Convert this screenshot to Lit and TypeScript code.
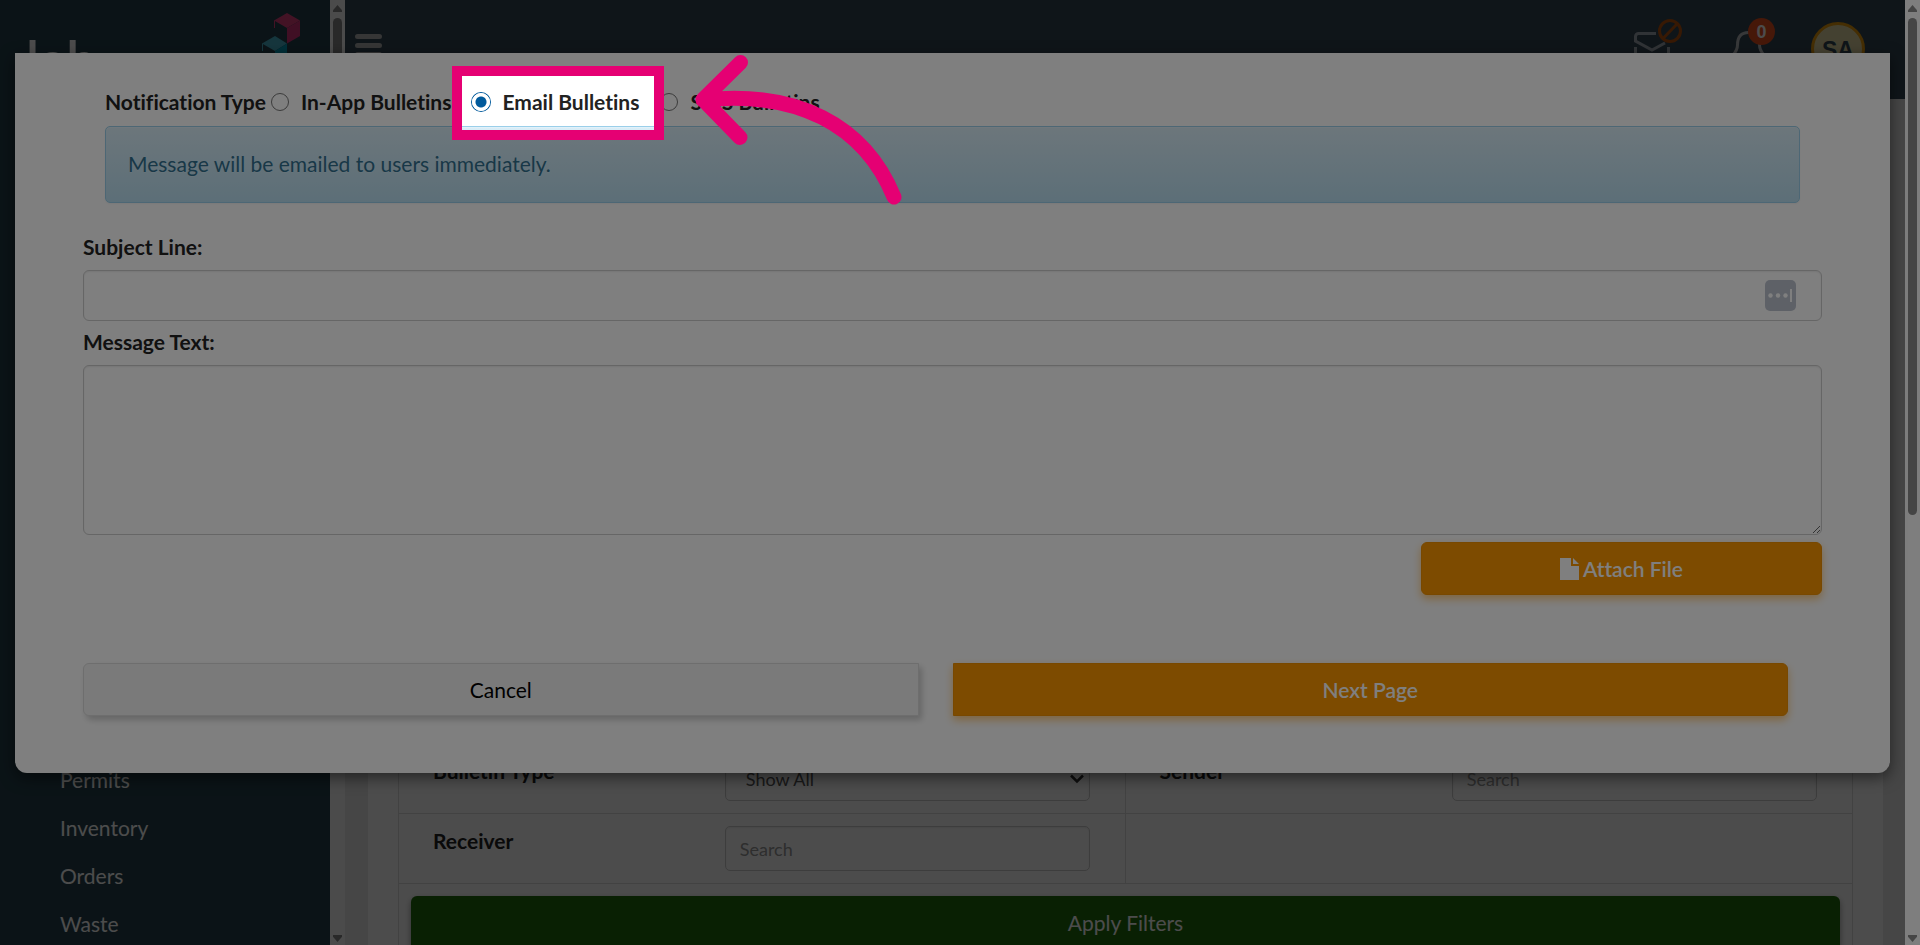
import { LitElement, html, css, svg } from "lit";
import { customElement } from "lit/decorators.js";

const NAV = ["Permits", "Inventory", "Orders", "Waste"];

@customElement("scroll-rail")
class ScrollRail extends LitElement {
  static styles = css`
    :host { display: flex; flex-direction: column; align-items: center; gap: 6px; box-sizing: border-box; flex: 0 0 15px; padding: 5px 0 3px; background: #fcfcfc; }
    .thumb { width: 9px; flex: 0 1 auto; border-radius: 5px; background: #8b8b8b; }
    .short { height: 497px; }
    .up, .down { display: block; flex: none; }
    .down { margin-top: auto; }
  `;
  render() {
    return html`
      <svg class="up" width="9" height="7" viewBox="0 0 9 7"><path d="M4.5 0 9 5.2V7H0V5.2z" fill="#8b8b8b"/></svg>
      <div class="thumb short"></div>
      <svg class="down" width="9" height="7" viewBox="0 0 9 7"><path d="M4.5 7 9 1.8V0H0v1.8z" fill="#8b8b8b"/></svg>`;
  }
}

@customElement("app-root")
class AppRoot extends LitElement {
  static styles = css`
    :host { display: block; position: relative; height: 100vh; overflow: hidden; font: 21px/28px Lato, sans-serif; font-variant-ligatures: none; color: #222; }
    * { box-sizing: border-box; }
    button, input, select, textarea { font: inherit; margin: 0; }
    .page { display: flex; height: 100%; }
    .shell { flex: 1; min-width: 0; display: flex; position: relative; }
    .sidebar { flex: 0 0 330px; display: flex; flex-direction: column; justify-content: space-between; background: #25424e; overflow: hidden; }
    .brand { display: flex; align-items: flex-start; justify-content: space-between; padding: 13px 30px 0 26px; }
    .word { font-weight: 600; font-size: 54px; line-height: 60px; padding-top: 17px; color: #fff; }
    .nav { display: flex; flex-direction: column; gap: 8px; padding: 0 0 1px 60px; }
    .nav a { line-height: 40px; color: #fff; text-decoration: none; }
    .main { flex: 1; min-width: 0; display: flex; flex-direction: column; background: #e9e9e9; }
    .top { flex: 0 0 99px; display: flex; justify-content: space-between; align-items: flex-start; padding: 17px 40px 0 10px; background: #334654; }
    .burger { border: 0; background: none; padding: 17px 0 0; line-height: 0; }
    .tools { display: flex; align-items: flex-start; }
    .filters { flex: 1; margin: 0 22px 0 23px; padding: 0 30px; background: #fff; display: flex; flex-direction: column; overflow: hidden; }
    .grid { flex: 1; border: solid #dedede; border-width: 0 1px; display: grid; grid-template-columns: 1fr 1fr; grid-template-rows: 70px 70px auto; align-content: end; }
    .cell { display: grid; grid-template-columns: 4fr 5fr; padding: 12px 35px 0 34px; border-bottom: 1px solid #dedede; color: #222; }
    .cell:nth-child(odd) { border-right: 1px solid #dedede; }
    .cell label { font-weight: 700; line-height: 30px; }
    .ctl { width: 100%; height: 45px; border: 1px solid #ccc; border-radius: 5px; background: #fff; font-size: 18px; padding: 0 14px; color: #555; box-shadow: inset 0 1px 2px rgba(0,0,0,.08); }
    .ctl::placeholder { color: #999; opacity: 1; }
    .pick { position: relative; }
    .pick select { appearance: none; padding-left: 20px; }
    .pick svg { position: absolute; right: 5px; top: 18px; }
    .applyrow { grid-column: 1 / -1; padding: 12px 12px 0; height: 61px; }
    .apply { width: 100%; height: 54px; border: 0; border-radius: 6px; background: #216b0d; color: #fff; box-shadow: 0 3px 6px rgba(0,0,0,.4); }
    .backdrop { position: absolute; inset: 0; background: rgba(0,0,0,.4); }

    .modal { position: absolute; top: 53px; left: 15px; right: 30px; background: #fff; border-radius: 0 0 12px 12px; box-shadow: 0 5px 15px rgba(0,0,0,.5); padding: 35px 68px 57px; display: flex; flex-direction: column; }
    .types { display: flex; align-items: center; padding-left: 22px; height: 28px; font-weight: 700; }
    .types label { display: flex; align-items: center; gap: 12px; position: relative; margin-right: 21px; white-space: nowrap; }
    .types input { appearance: none; width: 18px; height: 18px; border: 1px solid #767676; border-radius: 50%; }
    .types input:checked { border-color: #fff; background: radial-gradient(circle, #005a9c 5px, transparent 6px); box-shadow: 0 0 0 1px #005a9c; }
    .first { margin-right: 5px; }
    .alert { margin: 10px 22px 0; padding: 23px 22px; height: 77px; border: 1px solid #9acfea; border-radius: 5px; background: linear-gradient(#d9edf7, #b9def0); color: #31708f; text-shadow: 0 1px 0 rgba(255,255,255,.2); box-shadow: inset 0 1px 0 rgba(255,255,255,.25), 0 1px 2px rgba(0,0,0,.05); }
    .field-label { font-weight: 700; }
    .subject { margin-top: 30px; }
    .field { position: relative; display: flex; margin: 9px 0 7px; }
    .box { width: 100%; height: 51px; border: 1px solid #ccc; border-radius: 6px; background: #fff; box-shadow: inset 0 1px 2px rgba(0,0,0,.08); padding: 0 14px; }
    .area { height: 170px; resize: vertical; }
    .key { position: absolute; right: 26px; top: 10px; }
    .btn { height: 53px; border: 1px solid #f09000; border-radius: 6px; background: #fb9600; color: #fff; font-weight: 600; box-shadow: 0 4px 8px rgba(255,152,0,.5); }
    .attach { align-self: flex-end; width: 401px; display: flex; align-items: center; justify-content: center; gap: 4px; }
    .actions { display: grid; grid-template-columns: 1fr 1fr; gap: 34px; margin-top: 68px; padding-right: 34px; }
    .cancel { border-color: #ddd; background: #f5f5f5; color: #000; font-weight: 400; border-radius: 6px 0 0 6px; box-shadow: 3px 4px 6px rgba(0,0,0,.2); }
    .next { border-radius: 0 6px 6px 0; }
    .spot { position: absolute; z-index: 2; inset: -22px -25px -24px -20px; border: 10px solid #e50073; box-shadow: 0 0 0 9999px rgba(0,0,0,.5); pointer-events: none; }
    .arrow { position: absolute; z-index: 3; left: 100%; top: -35px; margin-left: 55px; pointer-events: none; }
  `;

  render() {
    return html`
      <div class="page">
        <div class="shell">
          <aside class="sidebar">
            <div class="brand">
              <span class="word">lab</span>
              ${svg`<svg width="38" height="60" viewBox="262 13 38 60">
                <path d="M274 20.5 287 13l13 7.5-13 7.5z" fill="#e0417e"/><path d="M287 28l13-7.5V36l-13 7.5z" fill="#d8347a"/>
                <path d="M274.500 20.500V28" stroke="#e0417e" fill="none"/>
                <path d="M262 43.500 275 36l12 7.500-12 7.500z" fill="#49b4cb"/><path d="M275 51l12-7.500V60l-12 7z" fill="#009fbd"/>
                <path d="M262.500 43.500V51" stroke="#49b4cb" fill="none"/></svg>`}
            </div>
            <nav class="nav">${NAV.map((n) => html`<a href="#">${n}</a>`)}</nav>
          </aside>
          <scroll-rail></scroll-rail>
          <div class="main">
            <header class="top">
              <button class="burger" aria-label="Menu">
                <svg width="27" height="23" viewBox="0 0 27 23"><path d="M2.500 2.500h22M2.500 11.500h22M2.500 20.500h22" stroke="#b4b4b4" stroke-width="5" stroke-linecap="round"/></svg>
              </button>
              <div class="tools">
                <svg width="231" height="60" viewBox="1634 17 231 60" role="img" aria-label="Messages, 0 notifications, account SA">
                  <g fill="none" stroke="#a2abb5" stroke-width="3">
                    <path d="M1656 33.500h-17.500a3 3 0 0 0-3 3V41l16.500 9 13-7M1635.500 47v15M1668.500 47v15"/>
                    <path d="M1733 55q4.500-5 4.500-10c0-7 3-12.500 11-12.500s11 5 11 12.500q0 5 4.500 10" stroke="#b9bcc0"/>
                    <g stroke="#b9540e"><circle cx="1670" cy="31" r="10.500"/><path d="M1663 38.500l14.500-15"/></g>
                  </g>
                  <circle cx="1761.500" cy="31.500" r="13.500" fill="#e9501e"/>
                  <text x="1761.500" y="38" text-anchor="middle" font-family="Liberation Sans" font-weight="700" font-size="18" fill="#fff">0</text>
                  <circle cx="1838" cy="49" r="25.500" fill="#e4d9a4" stroke="#e69a0c" stroke-width="3"/>
                  <text x="1838" y="58" text-anchor="middle" font-family="Liberation Sans" font-size="23" font-weight="700" fill="#334654">SA</text>
                </svg>
              </div>
            </header>
            <div class="filters">
              <div class="grid">
                <div class="cell"><label for="bt">Bulletin Type</label><div class="pick"><select id="bt" class="ctl"><option>Show All</option></select>
                  <svg width="16" height="10" viewBox="0 0 16 10"><path d="M2 1.500l6 6 6-6" fill="none" stroke="#333" stroke-width="2.500"/></svg></div></div>
                <div class="cell"><label for="se">Sender</label><input id="se" class="ctl" placeholder="Search"></div>
                <div class="cell"><label for="re">Receiver</label><input id="re" class="ctl" placeholder="Search"></div>
                <div class="cell"></div>
                <div class="applyrow"><button class="apply">Apply Filters</button></div>
              </div>
            </div>
          </div>
          <div class="backdrop"></div>
        </div>
        <scroll-rail></scroll-rail>
      </div>

      <section class="modal" role="dialog" aria-label="New bulletin">
        <div class="types" role="radiogroup" aria-labelledby="nt">
          <span id="nt" class="first">Notification Type</span>
          <label><input type="radio" name="t">In-App Bulletins</label>
          <label><input type="radio" name="t" checked>Email Bulletins
            <span class="spot"></span>
            <svg class="arrow" width="210" height="154" viewBox="694 53 210 154" fill="none" stroke="#e50073" stroke-width="15" stroke-linecap="round" stroke-linejoin="round">
              <path d="M740.500 62.500 703 99.500l37 38M703 100C796 90 864 124 894 197"/></svg>
          </label>
          <label><input type="radio" name="t">SMS Bulletins</label>
        </div>
        <div class="alert">Message will be emailed to users immediately.</div>
        <label class="field-label subject" for="su">Subject Line:</label>
        <div class="field"><input id="su" class="box">
          <svg class="key" width="31" height="31" viewBox="0 0 31 31"><rect width="31" height="31" rx="5" fill="#bcc3cf"/><g fill="#fff"><circle cx="5.500" cy="15.500" r="2.200"/><circle cx="13" cy="15.500" r="2.200"/><circle cx="20.500" cy="15.500" r="2.200"/><path d="M25 9h2v13h-2z"/></g></svg>
        </div>
        <label class="field-label" for="me">Message Text:</label>
        <div class="field"><textarea id="me" class="box area"></textarea></div>
        <button class="btn attach"><svg width="19" height="22" viewBox="0 0 19 22"><path d="M0 0h11v8h8v14H0zM13 0l6 6h-6z" fill="#fff"/></svg>Attach File</button>
        <div class="actions"><button class="btn cancel">Cancel</button><button class="btn next">Next Page</button></div>
      </section>
    `;
  }
}
